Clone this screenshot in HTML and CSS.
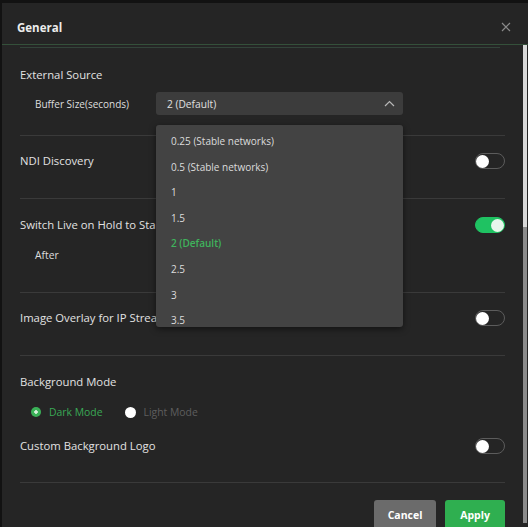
FILE: index.html
```html
<!DOCTYPE html>
<html lang="en">
<head>
    <meta charset="UTF-8">
    <meta name="viewport" content="width=device-width, initial-scale=1.0">
    <title>General Settings</title>
    <link rel="stylesheet" href="styles.css">
</head>
<body>
    <div class="modal">
        <div class="modal-header">
            <span class="modal-title">General</span>
            <button class="close-btn" aria-label="Close">
                <svg width="10" height="10" viewBox="0 0 10 10"><path d="M1 1L9 9M9 1L1 9" stroke="#8a8a8a" stroke-width="1.2" fill="none"/></svg>
            </button>
        </div>

        <div class="modal-main">
            <div class="modal-body">
                <div class="header-rule"></div>

                <section class="group first">
                    <div class="group-title">External Source</div>
                    <div class="field">
                        <span class="field-label">Buffer Size(seconds)</span>
                        <div class="select">
                            <div class="select-value">
                                <span>2 (Default)</span>
                                <svg width="11" height="7" viewBox="0 0 11 7"><path d="M1 6L5.5 1.5L10 6" stroke="#b8b8b8" stroke-width="1.2" fill="none"/></svg>
                            </div>
                            <ul class="select-menu">
                                <li>0.25 (Stable networks)</li>
                                <li>0.5 (Stable networks)</li>
                                <li>1</li>
                                <li>1.5</li>
                                <li class="selected">2 (Default)</li>
                                <li>2.5</li>
                                <li>3</li>
                                <li>3.5</li>
                            </ul>
                        </div>
                    </div>
                </section>

                <section class="group single">
                    <div class="row">
                        <span class="group-title">NDI Discovery</span>
                        <span class="toggle"></span>
                    </div>
                </section>

                <section class="group">
                    <div class="row">
                        <span class="group-title">Switch Live on Hold to Standby</span>
                        <span class="toggle on"></span>
                    </div>
                    <div class="sub-row">After</div>
                </section>

                <section class="group single">
                    <div class="row">
                        <span class="group-title">Image Overlay for IP Streams</span>
                        <span class="toggle"></span>
                    </div>
                </section>

                <section class="group last">
                    <div class="group-title">Background Mode</div>
                    <div class="radio-row">
                        <label class="radio checked"><span class="dot"></span>Dark Mode</label>
                        <label class="radio"><span class="dot"></span>Light Mode</label>
                    </div>
                    <div class="row logo-row">
                        <span class="group-title">Custom Background Logo</span>
                        <span class="toggle"></span>
                    </div>
                </section>

                <div class="footer">
                    <button class="btn cancel">Cancel</button>
                    <button class="btn apply">Apply</button>
                </div>
            </div>

            <div class="scrollbar">
                <div class="scroll-track"></div>
                <div class="scroll-thumb"></div>
            </div>
        </div>
    </div>
</body>
</html>
```

FILE: styles.css
```css
html, body {
    height: 100%;
}
body {
    margin: 0;
    background: #121212;
    font-family: "Open Sans", "Noto Sans", Arial, sans-serif;
    color: #e4e4e4;
    overflow: hidden;
}
.modal {
    margin: 3px 0 0 2px;
    background: #252525;
    height: 600px;
}
.modal-header {
    height: 41px;
    display: flex;
    align-items: center;
    justify-content: space-between;
    padding: 0 17px 0 15px;
    border-bottom: 1px solid #34503a;
}
.modal-title {
    font-size: 11.5px;
    font-weight: 700;
    color: #ececec;
    padding-top: 8px;
}
.close-btn {
    background: none;
    border: none;
    padding: 0;
    margin-top: 7px;
    cursor: pointer;
    display: flex;
}
.modal-main {
    display: flex;
}
.modal-body {
    flex: 1;
    padding: 0 18px 0 18px;
}
.header-rule {
    height: 1px;
    margin: 2px 5px 0 0;
    background: #33443a;
}
.group {
    padding: 17px 0 28px;
    border-bottom: 1px solid #3a3a3a;
}
.group.first {
    padding: 18px 0 20px;
}
.group.single {
    padding: 16px 0 28px;
}
.group.last {
    padding-bottom: 27px;
}
.group-title {
    font-size: 11.3px;
    line-height: 18px;
    color: #e2e2e2;
    white-space: nowrap;
}
.row {
    display: flex;
    align-items: center;
    justify-content: space-between;
    height: 18px;
}
.sub-row {
    margin-top: 12px;
    padding-left: 15px;
    font-size: 10.3px;
    line-height: 18px;
    color: #dedede;
}
.field {
    display: flex;
    align-items: center;
    margin-top: 8px;
}
.field-label {
    width: 121px;
    padding-left: 15px;
    font-size: 10px;
    color: #dedede;
}
.select {
    position: relative;
    width: 247px;
}
.select-value {
    height: 23px;
    background: #3c3c3c;
    border-radius: 3px;
    display: flex;
    align-items: center;
    justify-content: space-between;
    padding: 0 8px 0 11px;
    font-size: 10.2px;
    color: #e0e0e0;
}
.select-menu {
    position: absolute;
    top: 33px;
    left: 0;
    width: 100%;
    height: 202px;
    margin: 0;
    padding: 4px 0 0;
    list-style: none;
    background: #434343;
    border-radius: 3px;
    box-shadow: 0 2px 6px rgba(0,0,0,0.5);
    box-sizing: border-box;
    overflow: hidden;
    z-index: 5;
}
.select-menu::before {
    content: "";
    position: absolute;
    top: -5px;
    left: 27px;
    border-left: 5px solid transparent;
    border-right: 5px solid transparent;
    border-bottom: 5px solid #434343;
}
.select-menu li {
    height: 25.6px;
    line-height: 25.6px;
    padding-left: 15px;
    font-size: 10px;
    color: #dcdcdc;
}
.select-menu li.selected {
    color: #3fb35c;
    font-weight: 600;
}
.toggle {
    position: relative;
    width: 30px;
    height: 16px;
    border: 1px solid #5c5c5c;
    border-radius: 9px;
    box-sizing: border-box;
    flex-shrink: 0;
}
.toggle::after {
    content: "";
    position: absolute;
    top: 0.5px;
    left: 0;
    width: 13px;
    height: 13px;
    border-radius: 50%;
    background: #fff;
}
.toggle.on {
    background: #1fc262;
    border-color: #1fc262;
}
.toggle.on::after {
    left: auto;
    right: 0;
    background: #e8f6ec;
}
.radio-row {
    display: flex;
    align-items: center;
    gap: 22px;
    height: 18px;
    margin-top: 12px;
    padding-left: 11px;
    font-size: 10.4px;
}
.radio {
    display: flex;
    align-items: center;
    gap: 8px;
    color: #5e5e5e;
}
.radio .dot {
    width: 11px;
    height: 11px;
    border-radius: 50%;
    background: #fff;
}
.radio.checked {
    color: #3aa955;
}
.radio.checked .dot {
    width: 10px;
    height: 10px;
    background: radial-gradient(circle, #d8f0dc 0 1.5px, #3ab157 2px);
}
.logo-row {
    margin-top: 16px;
}
.footer {
    display: flex;
    justify-content: flex-end;
    gap: 9px;
    padding-top: 17px;
}
.btn {
    height: 30px;
    border: none;
    border-radius: 3px;
    color: #fff;
    font-family: inherit;
    font-size: 10.5px;
    font-weight: 700;
    cursor: pointer;
}
.cancel {
    width: 62px;
    background: #6b6b6b;
}
.apply {
    width: 60px;
    background: #2faf50;
}
.scrollbar {
    width: 4px;
    margin-right: 1px;
    display: flex;
    flex-direction: column;
    height: 478px;
}
.scroll-track {
    height: 182px;
    background: #d8d8d8;
}
.scroll-thumb {
    flex: 1;
    background: #8c8c8c;
}
```
